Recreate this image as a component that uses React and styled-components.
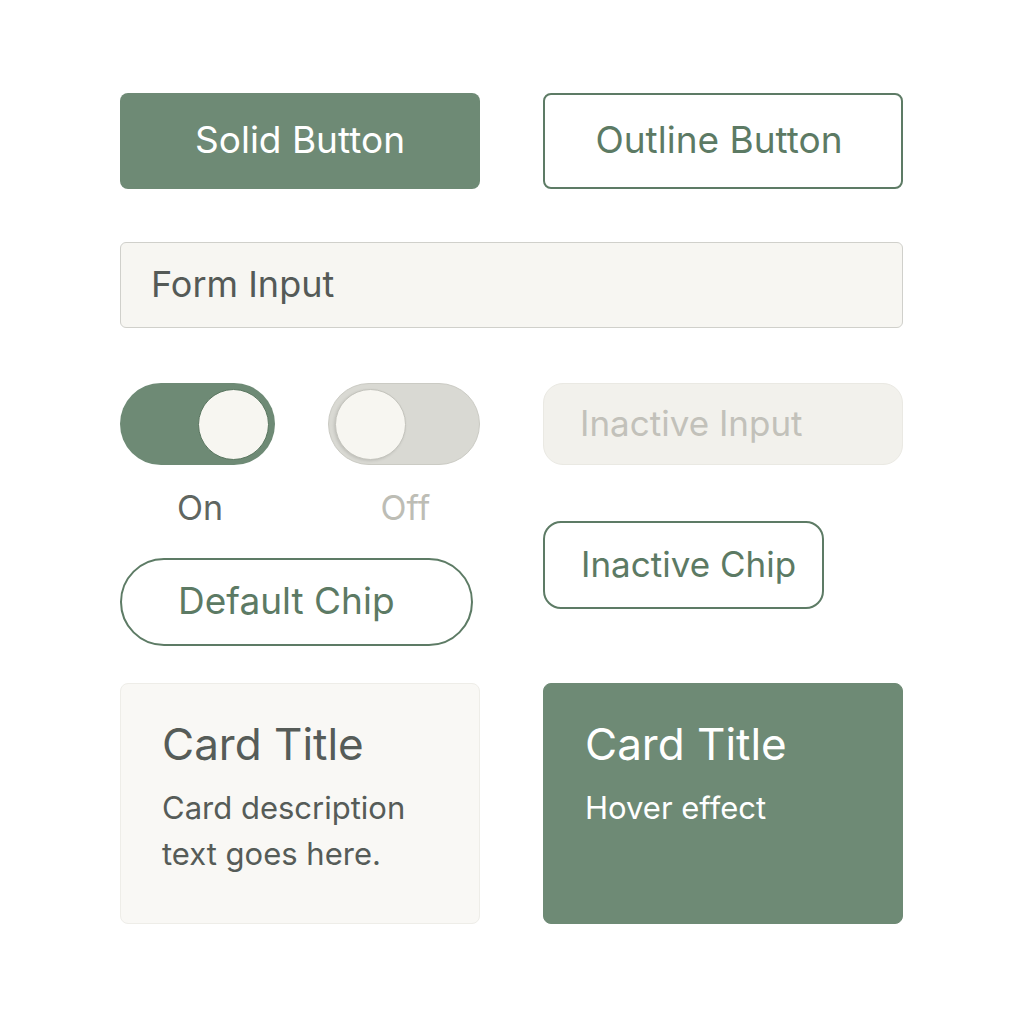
import React from "react";
import styled, { createGlobalStyle } from "styled-components";

const green = "#6e8a75";
const greenLine = "#5d7b65";
const greenText = "#5c7a64";

const GlobalStyle = createGlobalStyle`
  html, body {
    margin: 0;
    padding: 0;
    background: #ffffff;
  }
  body {
    font-family: Inter, "Noto Sans", sans-serif;
    -webkit-font-smoothing: antialiased;
  }
`;

const Page = styled.div`
  width: 1024px;
  height: 1024px;
  box-sizing: border-box;
  padding: 93px 0 0 120px;
`;

const Grid = styled.div`
  width: 783px;
  display: grid;
  grid-template-columns: 360px 360px;
  column-gap: 63px;
`;

const Button = styled.button`
  height: 96px;
  box-sizing: border-box;
  border-radius: 8px;
  font-family: Inter, sans-serif;
  font-size: 37px;
  font-weight: 400;
  display: flex;
  align-items: center;
  justify-content: center;
  padding: 0 ${(p) => (p.$outline ? 8 : 0)}px 4px 0;
  cursor: pointer;
  background: ${(p) => (p.$outline ? "#ffffff" : green)};
  color: ${(p) => (p.$outline ? greenText : "#ffffff")};
  border: ${(p) => (p.$outline ? `2px solid ${greenLine}` : "none")};
`;

const FormInput = styled.div`
  grid-column: 1 / span 2;
  margin-top: 53px;
  height: 86px;
  box-sizing: border-box;
  border: 1.5px solid #d0d0cb;
  border-radius: 6px;
  background: #f7f6f2;
  display: flex;
  align-items: center;
  padding: 0 0 2px 30px;
  font-size: 36px;
  color: #555a57;
`;

const Column = styled.div`
  margin-top: 55px;
  display: flex;
  flex-direction: column;
  align-items: flex-start;
`;

const ToggleRow = styled.div`
  display: flex;
  gap: 53px;
`;

const ToggleBlock = styled.div`
  display: flex;
  flex-direction: column;
  align-items: center;
`;

const Track = styled.div`
  width: ${(p) => (p.$on ? 155 : 152)}px;
  height: 82px;
  box-sizing: border-box;
  border-radius: 41px;
  display: flex;
  align-items: center;
  justify-content: ${(p) => (p.$on ? "flex-end" : "flex-start")};
  padding: 0 6px;
  background: ${(p) => (p.$on ? green : "#d9d9d3")};
  border: ${(p) => (p.$on ? "none" : "1.5px solid #cbcbc4")};
`;

const Knob = styled.div`
  width: 71px;
  height: 71px;
  border-radius: 50%;
  background: #f7f6f1;
  box-sizing: border-box;
  border: ${(p) => (p.$on ? "1px solid #5a7660" : "1px solid #c4c4bd")};
  box-shadow: ${(p) => (p.$on ? "none" : "-1px 1px 3px rgba(0,0,0,0.12)")};
`;

const ToggleLabel = styled.div`
  margin-top: 23px;
  padding-left: ${(p) => (p.$on ? 5 : 3)}px;
  font-size: 34px;
  line-height: 40px;
  color: ${(p) => (p.$on ? "#5f6661" : "#bdbdb5")};
`;

const Chip = styled.div`
  box-sizing: border-box;
  height: 88px;
  border: 2px solid ${greenLine};
  background: #ffffff;
  color: ${greenText};
  display: flex;
  align-items: center;
  font-size: ${(p) => p.$size}px;
  width: ${(p) => p.$width}px;
  border-radius: ${(p) => p.$radius}px;
  padding: 0 0 3px ${(p) => p.$pad}px;
  margin-top: ${(p) => p.$top}px;
`;

const DisabledInput = styled.div`
  width: 360px;
  height: 82px;
  box-sizing: border-box;
  border-radius: 20px;
  background: #f2f1ec;
  border: 1px solid #eae9e3;
  display: flex;
  align-items: center;
  padding: 0 0 2px 36px;
  font-size: 35px;
  color: #c2c1ba;
`;

const Card = styled.div`
  margin-top: 37px;
  height: 241px;
  box-sizing: border-box;
  border-radius: 8px;
  padding: 34px 30px 0 41px;
  background: ${(p) => (p.$filled ? green : "#f9f8f5")};
  border: 1px solid ${(p) => (p.$filled ? green : "#eeede8")};
  color: ${(p) => (p.$filled ? "#ffffff" : "#565c58")};
`;

const CardTitle = styled.div`
  font-size: 44px;
  line-height: 52px;
`;

const CardText = styled.div`
  margin-top: 15px;
  font-size: 31px;
  line-height: 46px;
`;

export default function App() {
  return (
    <Page>
      <GlobalStyle />
      <Grid>
        <Button>Solid Button</Button>
        <Button $outline>Outline Button</Button>

        <FormInput>Form Input</FormInput>

        <Column>
          <ToggleRow>
            <ToggleBlock>
              <Track $on>
                <Knob $on />
              </Track>
              <ToggleLabel $on>On</ToggleLabel>
            </ToggleBlock>
            <ToggleBlock>
              <Track>
                <Knob />
              </Track>
              <ToggleLabel>Off</ToggleLabel>
            </ToggleBlock>
          </ToggleRow>
          <Chip $size={37} $width={353} $radius={44} $pad={56} $top={30}>
            Default Chip
          </Chip>
        </Column>

        <Column>
          <DisabledInput>Inactive Input</DisabledInput>
          <Chip $size={35} $width={281} $radius={18} $pad={36} $top={56}>
            Inactive Chip
          </Chip>
        </Column>

        <Card>
          <CardTitle>Card Title</CardTitle>
          <CardText>
            Card description
            <br />
            text goes here.
          </CardText>
        </Card>
        <Card $filled>
          <CardTitle>Card Title</CardTitle>
          <CardText>Hover effect</CardText>
        </Card>
      </Grid>
    </Page>
  );
}
